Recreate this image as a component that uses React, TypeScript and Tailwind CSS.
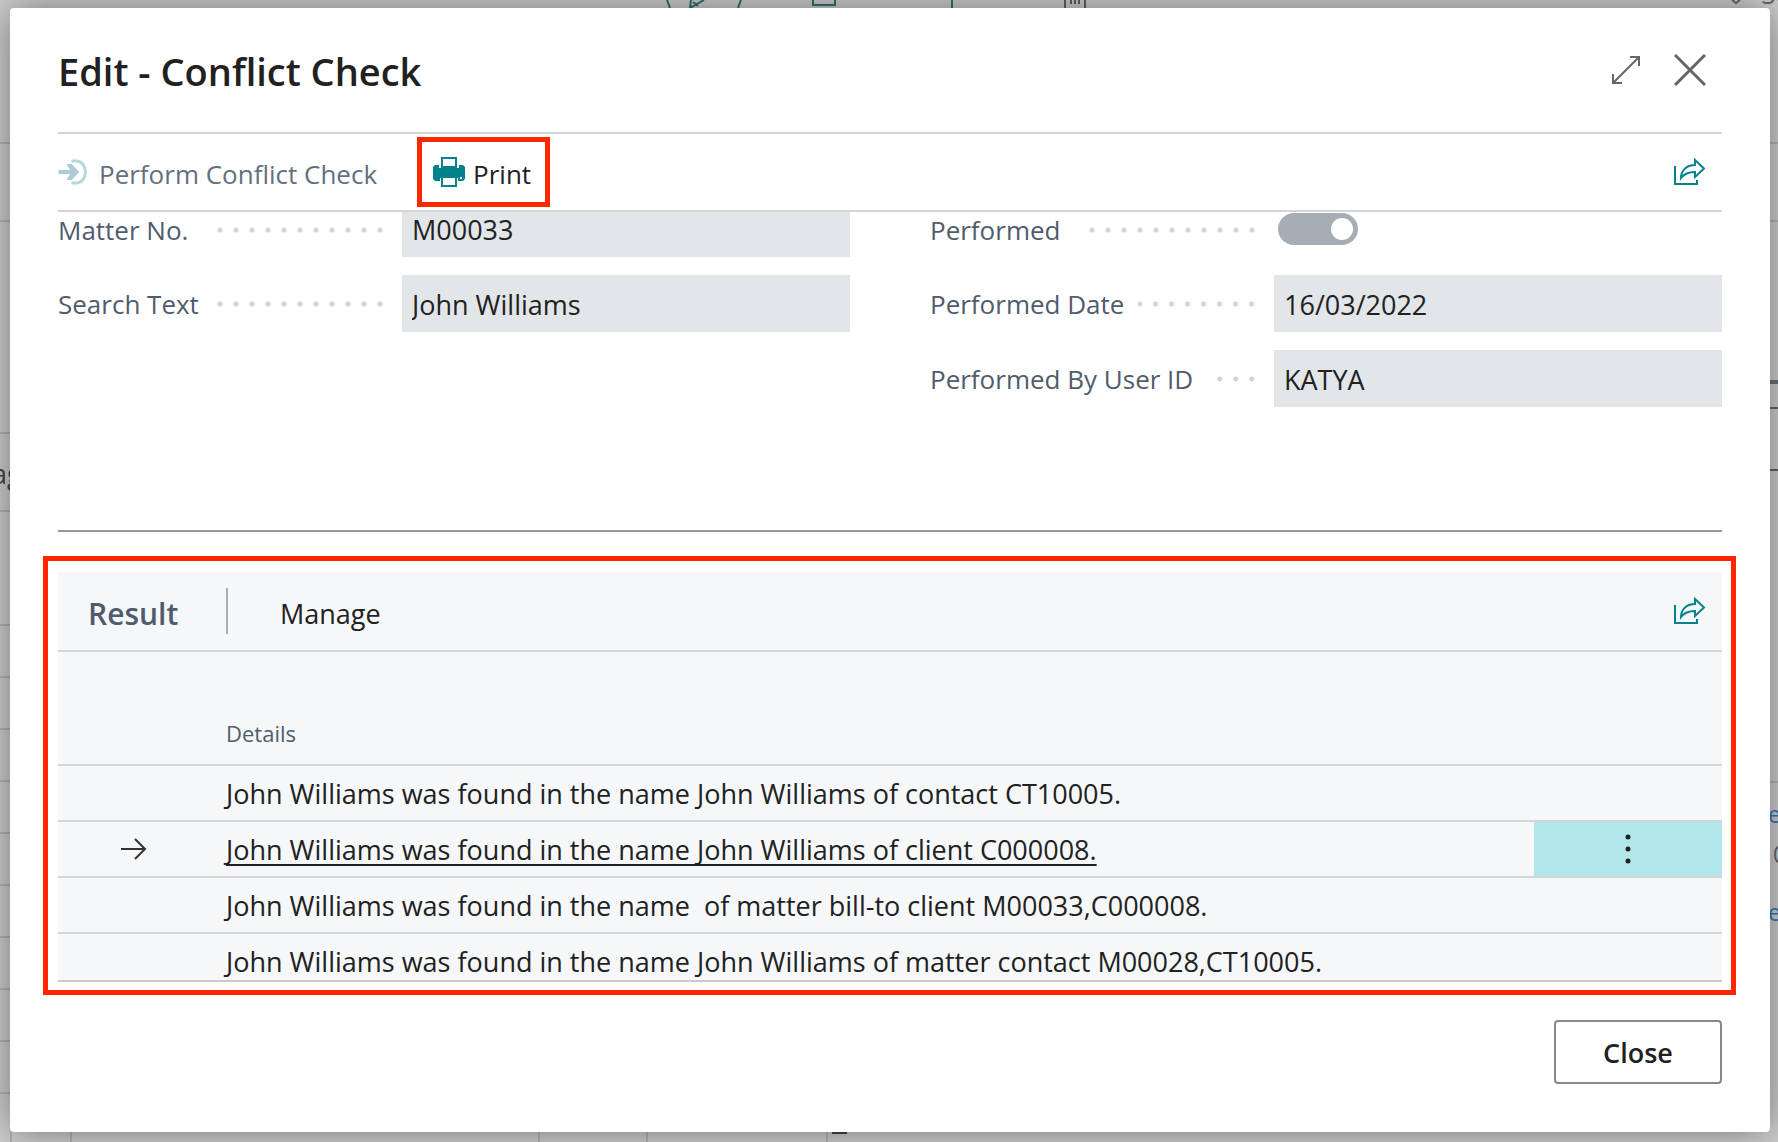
import { useState } from "react";

const results = [
    "John Williams was found in the name John Williams of contact CT10005.",
    "John Williams was found in the name John Williams of client C000008.",
    "John Williams was found in the name  of matter bill-to client M00033,C000008.",
    "John Williams was found in the name John Williams of matter contact M00028,CT10005.",
];

// row and column rules of the page that stays visible around the dialog
const leftRules = [142, 220, 432, 510, 624, 676, 728, 780, 832, 884, 936, 988, 1040, 1092];
const rightRules = [142, 220, 781];
const bottomRules = [10, 70, 538, 646, 826];

function ShareIcon() {
    return (
        <svg width="32" height="28" viewBox="0 0 32 28" fill="none" stroke="#00838a" strokeWidth="2">
            <path d="M1 8v18h22v-4" />
            <path d="M21 2l9 8.500-9 8.500v-5C14 14 10 16 7 20c0-7 5-13 14-13z" />
        </svg>
    );
}

function PerformIcon() {
    return (
        <svg width="31" height="26" viewBox="0 0 30 26" fill="none" stroke="#a9cdd2">
            <path d="M0 13h16" strokeWidth="4" />
            <path d="M8 5h5l8 8-8 8H8l5-8z" fill="#a9cdd2" stroke="none" />
            <path d="M13 2h5a9 11 0 0 1 0 22h-5" strokeWidth="3" stroke="#b9d7db" />
        </svg>
    );
}

function PrintIcon() {
    return (
        <svg width="32" height="30" viewBox="0 0 32 30">
            <path d="M2 8h4v3h20V8h4l2 2v12l-2 2H2l-2-2V10z" fill="#00838a" />
            <path d="M9 1h14v9H9z" fill="#fff" stroke="#00838a" strokeWidth="2" />
            <path d="M7 21h1v4H7zM24 21h1v4h-1z" fill="#fff" />
            <path d="M9 20h14v9H9z" fill="#fff" stroke="#00838a" strokeWidth="2" />
            <path d="M27 20h2v2h-2z" fill="#fff" />
        </svg>
    );
}

function Label({ id, text }: { id: string; text: string }) {
    return (
        <div className="flex h-9 w-[330px] shrink-0 items-center gap-[14px] text-[26px] leading-[36px] text-[#505c6d]">
            <label htmlFor={id} className="min-w-[138px] whitespace-nowrap">{text}</label>
            <span className="h-4 flex-1 bg-[radial-gradient(circle,#d0d3d7_0_2px,transparent_3px)] bg-[length:16px_16px] bg-right" />
        </div>
    );
}

function Field({ id, label, value, first }: { id: string; label: string; value: string; first?: boolean }) {
    return (
        <div className={first ? "flex h-[45px] items-start gap-[14px]" : "flex h-[57px] items-center gap-[14px]"}>
            <Label id={id} text={label} />
            <input
                id={id}
                readOnly
                defaultValue={value}
                className={`h-full min-w-0 flex-1 bg-[#e2e6e9] px-[10px] text-[#212121] outline-none ${first ? "pb-[10px]" : "pt-[2px]"}`}
            />
        </div>
    );
}

function Backdrop() {
    return (
        <div className="absolute inset-0 overflow-hidden bg-[#d0d0d0]">
            <svg className="absolute top-0 left-[660px]" width="440" height="8" fill="none" stroke="#2f7276" strokeWidth="2">
                <path d="M7 0l3 8M81 0l-3 8M31 0l-1 8 14-8M33 2l5 4M153 0v5h22V0M292 0v8" />
                <path d="M405 0v8M425 0v8M411 0v4M415 0v4M419 0v4" stroke="#5d626b" />
            </svg>
            <svg className="absolute top-0 right-9" width="12" height="6" fill="none" stroke="#666b75" strokeWidth="2">
                <path d="M2 0l4 3 4-3" />
            </svg>
            <span className="absolute -top-6 left-[1761px] leading-[36px] text-[#666b75]">Se</span>
            {leftRules.map((y) => <div key={y} className="absolute left-0 h-[2px] w-3 bg-[#b5b5b5]" style={{ top: y }} />)}
            {rightRules.map((y) => <div key={y} className="absolute right-0 h-[2px] w-3 bg-[#b5b5b5]" style={{ top: y }} />)}
            {bottomRules.map((x) => <div key={x} className="absolute bottom-0 h-3 w-[2px] bg-[#b5b5b5]" style={{ left: x }} />)}
            <span className="absolute top-[456px] -left-2 leading-[36px] text-[#444]">ag</span>
            <div className="absolute top-[380px] right-0 h-1 w-3 bg-[#66707c]" />
            <div className="absolute top-[407px] right-0 h-[2px] w-3 bg-[#666]" />
            <div className="absolute top-[469px] right-0 h-[2px] w-3 bg-[#666]" />
            <span className="absolute top-[796px] left-[1768px] text-[23px] leading-[36px] text-[#2f78bd]">e</span>
            <span className="absolute top-[836px] left-[1773px] text-[23px] leading-[36px] text-[#666]">0</span>
            <span className="absolute top-[894px] left-[1768px] text-[23px] leading-[36px] text-[#2f78bd]">e</span>
            <div className="absolute bottom-2 left-[832px] h-[2px] w-[15px] bg-[#444]" />
        </div>
    );
}

export default function App() {
    const [performed, setPerformed] = useState(true);

    return (
        <div className="relative min-h-screen pt-2 pr-2 pb-[10px] pl-[10px] font-['Open_Sans',sans-serif] text-[27px] text-[#212121]">
            <Backdrop />
            <div role="dialog" className="relative flex min-h-[1124px] flex-col rounded-[4px] bg-white px-12 shadow-[0_0_40px_rgba(0,0,0,0.46)]">
                <header className="flex h-[124px] items-center justify-between">
                    <h1 className="pt-[2px] text-[38px] font-semibold">Edit - Conflict Check</h1>
                    <div className="flex items-center gap-[34px] pr-4">
                        <button aria-label="Expand">
                            <svg width="28" height="28" fill="none" stroke="#666" strokeWidth="2">
                                <path d="M2 26L26 2M18 1h9v9M1 18v9h9" />
                            </svg>
                        </button>
                        <button aria-label="Close dialog">
                            <svg width="32" height="32" fill="none" stroke="#666" strokeWidth="3">
                                <path d="M1 1l30 30M31 1L1 31" />
                            </svg>
                        </button>
                    </div>
                </header>

                <div className="flex h-20 items-center border-y-2 border-[#d2d6da] text-[26px]">
                    <button className="flex items-center gap-[10px] text-[#646f7e]">
                        <PerformIcon />
                        <span className="pt-1">Perform Conflict Check</span>
                    </button>
                    <button className="ml-10 flex h-[70px] w-[133px] items-center gap-2 border-5 border-[#ff2600] pl-[11px]">
                        <PrintIcon />
                        <span className="pt-1">Print</span>
                    </button>
                    <button aria-label="Share" className="mr-4 ml-auto"><ShareIcon /></button>
                </div>

                <div className="grid h-[320px] grid-cols-2 gap-20 border-b-2 border-[#999]">
                    <div className="flex flex-col gap-[18px]">
                        <Field id="matter" label="Matter No." value="M00033" first />
                        <Field id="search" label="Search Text" value="John Williams" />
                    </div>
                    <div className="flex flex-col gap-[18px]">
                        <div className="flex h-[45px] items-start gap-[18px]">
                            <Label id="performed" text="Performed" />
                            <input
                                id="performed"
                                type="checkbox"
                                role="switch"
                                checked={performed}
                                onChange={(e) => setPerformed(e.target.checked)}
                                className="mt-px flex h-8 w-20 appearance-none items-center rounded-full bg-[#a6adb5] px-[5px] before:size-[22px] before:rounded-full before:bg-white checked:justify-end"
                            />
                        </div>
                        <Field id="date" label="Performed Date" value="16/03/2022" />
                        <Field id="user" label="Performed By User ID" value="KATYA" />
                    </div>
                </div>

                <section className="-mr-[14px] -ml-[15px] mt-6 border-5 border-[#ff2600] pt-[11px] pr-[9px] pb-2 pl-[10px]">
                    <div className="flex h-20 items-center border-b-2 border-[#d2d5dc] bg-[#f5f7f9] pr-4 pl-[30px]">
                        <h2 className="w-[138px] pt-[6px] text-[30px] leading-[42px] font-semibold text-[#505c6d]">Result</h2>
                        <div className="h-[46px] w-[2px] bg-[#a6adb7]" />
                        <button className="ml-[52px] pt-[6px]">Manage</button>
                        <button aria-label="Share result" className="ml-auto"><ShareIcon /></button>
                    </div>
                    <div className="h-[330px] overflow-hidden border-b-2 border-[#c8cacd] bg-[#f5f7f9]">
                        <table className="w-full table-fixed border-collapse">
                            <thead>
                                <tr className="h-[113px] border-b-2 border-[#d2d5dc]">
                                    <th className="w-[168px]" />
                                    <th className="p-0 pb-4 text-left align-bottom text-[22px] leading-[30px] font-normal text-[#505c6d]">Details</th>
                                    <th className="w-[188px]" />
                                </tr>
                            </thead>
                            <tbody>
                                {results.map((text, i) => (
                                    <tr key={text} className="h-14 border-b-2 border-[#d2d5dc]">
                                        <td>
                                            {i === 1 && (
                                                <svg className="ml-[63px]" width="26" height="22" fill="none" stroke="#333" strokeWidth="2">
                                                    <path d="M0 11h24M14 1l10 10-10 10" />
                                                </svg>
                                            )}
                                        </td>
                                        <td className="p-0 pt-[2px] leading-[36px] whitespace-pre">
                                            {i === 1 ? <a href="#" className="underline decoration-2 underline-offset-4 [text-decoration-skip-ink:none]">{text}</a> : text}
                                        </td>
                                        <td className={i === 1 ? "bg-[#b2e7ec] p-0" : "p-0"}>
                                            {i === 1 && (
                                                <button aria-label="More options" className="flex h-[54px] w-full items-center justify-center">
                                                    <svg width="6" height="30" fill="#212121">
                                                        <circle cx="3" cy="3" r="2.500" />
                                                        <circle cx="3" cy="15" r="2.500" />
                                                        <circle cx="3" cy="27" r="2.500" />
                                                    </svg>
                                                </button>
                                            )}
                                        </td>
                                    </tr>
                                ))}
                            </tbody>
                        </table>
                    </div>
                </section>

                <footer className="flex justify-end pt-[25px]">
                    <button className="h-16 w-[168px] rounded-[4px] border-2 border-[#888] pt-[2px] font-semibold">Close</button>
                </footer>
            </div>
        </div>
    );
}
